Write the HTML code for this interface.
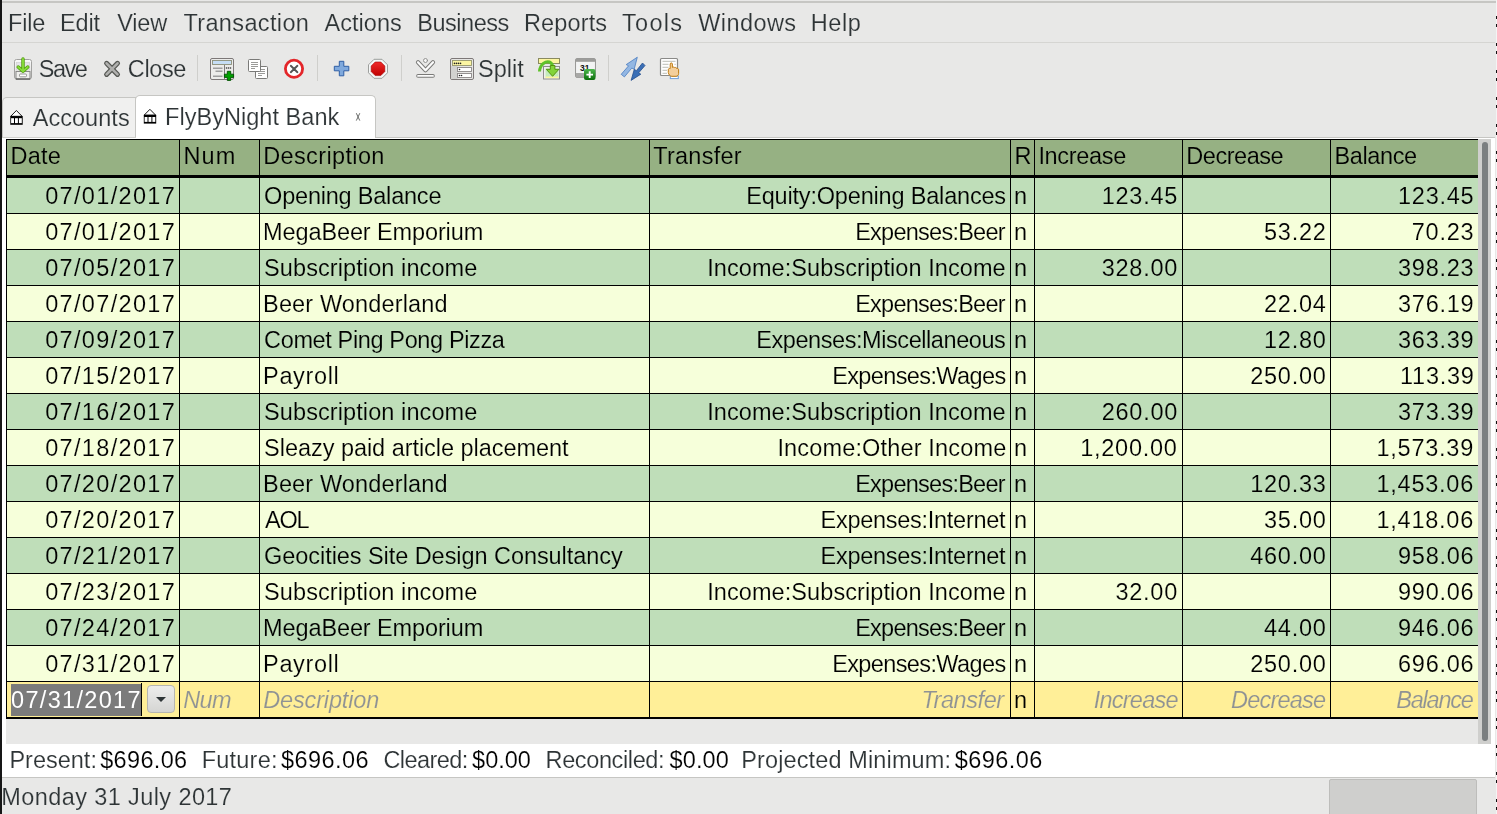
<!DOCTYPE html>
<html><head><meta charset="utf-8">
<style>
*{margin:0;padding:0;box-sizing:border-box}
html,body{width:1497px;height:814px;overflow:hidden;background:#e8e8e7;font-family:"Liberation Sans",sans-serif;position:relative}
.a{position:absolute}
.t{position:absolute;font-size:23.5px;line-height:26px;white-space:pre;color:#000}
</style></head><body>
<div class="a" style="left:0;top:0;width:2px;height:814px;background:#161616"></div>
<div class="a" style="left:1496px;top:0;width:1px;height:814px;background:repeating-linear-gradient(#f4f4f4 0 16px,#111 16px 19px,#f4f4f4 19px 24px,#111 24px 27px)"></div>
<div class="a" style="left:2px;top:1px;width:1494px;height:2px;background:#c6c6c3"></div>
<div class="a" style="left:2px;top:42px;width:1493px;height:1px;background:#d5d5d2"></div>
<div class="a" style="left:197px;top:55px;width:1px;height:26px;background:#cfcfcc"></div>
<div class="a" style="left:317px;top:55px;width:1px;height:26px;background:#cfcfcc"></div>
<div class="a" style="left:401px;top:55px;width:1px;height:26px;background:#cfcfcc"></div>
<div class="a" style="left:608px;top:55px;width:1px;height:26px;background:#cfcfcc"></div>
<div class="a" style="left:2px;top:97px;width:134px;height:41px;background:#f0f0ef;border:1px solid #c6c6c3;border-bottom:none;border-radius:5px 0 0 0"></div>
<div class="a" style="left:135px;top:95px;width:241px;height:43px;background:#fff;border:1px solid #c6c6c3;border-bottom:none;border-radius:5px 5px 0 0"></div>
<div class="a" style="left:376px;top:137px;width:1119px;height:1px;background:#c6c6c3"></div>
<div class="a" style="left:2px;top:137px;width:134px;height:1px;background:#d0d0cd"></div>
<div class="a" style="left:2px;top:138px;width:1493px;height:639px;background:#fff"></div>
<div class="a" style="left:6px;top:139px;width:1472px;height:1px;background:#000"></div>
<div class="a" style="left:6px;top:140px;width:1472px;height:35px;background:#96b183"></div>
<div class="a" style="left:6px;top:175px;width:1472px;height:3px;background:#000"></div>
<div class="a" style="left:6px;width:1472px;top:178px;height:35px;background:#bfdeb9"></div>
<div class="a" style="left:6px;width:1472px;top:213px;height:1px;background:#000"></div>
<div class="a" style="left:6px;width:1472px;top:214px;height:35px;background:#f6ffda"></div>
<div class="a" style="left:6px;width:1472px;top:249px;height:1px;background:#000"></div>
<div class="a" style="left:6px;width:1472px;top:250px;height:35px;background:#bfdeb9"></div>
<div class="a" style="left:6px;width:1472px;top:285px;height:1px;background:#000"></div>
<div class="a" style="left:6px;width:1472px;top:286px;height:35px;background:#f6ffda"></div>
<div class="a" style="left:6px;width:1472px;top:321px;height:1px;background:#000"></div>
<div class="a" style="left:6px;width:1472px;top:322px;height:35px;background:#bfdeb9"></div>
<div class="a" style="left:6px;width:1472px;top:357px;height:1px;background:#000"></div>
<div class="a" style="left:6px;width:1472px;top:358px;height:35px;background:#f6ffda"></div>
<div class="a" style="left:6px;width:1472px;top:393px;height:1px;background:#000"></div>
<div class="a" style="left:6px;width:1472px;top:394px;height:35px;background:#bfdeb9"></div>
<div class="a" style="left:6px;width:1472px;top:429px;height:1px;background:#000"></div>
<div class="a" style="left:6px;width:1472px;top:430px;height:35px;background:#f6ffda"></div>
<div class="a" style="left:6px;width:1472px;top:465px;height:1px;background:#000"></div>
<div class="a" style="left:6px;width:1472px;top:466px;height:35px;background:#bfdeb9"></div>
<div class="a" style="left:6px;width:1472px;top:501px;height:1px;background:#000"></div>
<div class="a" style="left:6px;width:1472px;top:502px;height:35px;background:#f6ffda"></div>
<div class="a" style="left:6px;width:1472px;top:537px;height:1px;background:#000"></div>
<div class="a" style="left:6px;width:1472px;top:538px;height:35px;background:#bfdeb9"></div>
<div class="a" style="left:6px;width:1472px;top:573px;height:1px;background:#000"></div>
<div class="a" style="left:6px;width:1472px;top:574px;height:35px;background:#f6ffda"></div>
<div class="a" style="left:6px;width:1472px;top:609px;height:1px;background:#000"></div>
<div class="a" style="left:6px;width:1472px;top:610px;height:35px;background:#bfdeb9"></div>
<div class="a" style="left:6px;width:1472px;top:645px;height:1px;background:#000"></div>
<div class="a" style="left:6px;width:1472px;top:646px;height:35px;background:#f6ffda"></div>
<div class="a" style="left:6px;width:1472px;top:681px;height:1px;background:#000"></div>
<div class="a" style="left:6px;top:682px;width:1472px;height:35px;background:#ffef98"></div>
<div class="a" style="left:6px;top:717px;width:1472px;height:2px;background:#000"></div>
<div class="a" style="left:11px;top:684px;width:131px;height:32px;background:#7b7b7b"></div>
<div class="a" style="left:147px;top:685px;width:28px;height:28px;border:1px solid #b6b6b3;border-radius:4px;background:linear-gradient(#ededec,#d5d5d3)"></div>
<div class="a" style="left:156px;top:697px;width:0;height:0;border-left:5px solid transparent;border-right:5px solid transparent;border-top:5px solid #2e3436"></div>
<div class="a" style="left:141px;top:683px;width:1px;height:33px;background:#000"></div>
<div class="a" style="left:6px;top:139px;width:1px;height:580px;background:#000"></div><div class="a" style="left:179px;top:139px;width:1px;height:580px;background:#000"></div><div class="a" style="left:259px;top:139px;width:1px;height:580px;background:#000"></div><div class="a" style="left:649px;top:139px;width:1px;height:580px;background:#000"></div><div class="a" style="left:1010px;top:139px;width:1px;height:580px;background:#000"></div><div class="a" style="left:1034px;top:139px;width:1px;height:580px;background:#000"></div><div class="a" style="left:1182px;top:139px;width:1px;height:580px;background:#000"></div><div class="a" style="left:1330px;top:139px;width:1px;height:580px;background:#000"></div>
<div class="a" style="left:6px;top:719px;width:1472px;height:25px;background:#e8e8e7"></div>
<div class="a" style="left:1478px;top:139px;width:13px;height:605px;background:#cfcfcd"></div>
<div class="a" style="left:1482px;top:142px;width:6px;height:599px;background:#7b7f80;border-radius:3px"></div>
<div class="a" style="left:2px;top:777px;width:1493px;height:1px;background:#c6c6c3"></div>
<div class="a" style="left:2px;top:778px;width:1493px;height:36px;background:#e8e8e7"></div>
<div class="a" style="left:1329px;top:779px;width:148px;height:40px;background:#cfcfcd;border:1px solid #bdbdbb;border-radius:2px"></div>
<svg class="a" style="left:0;top:0" width="1497" height="814" viewBox="0 0 1497 814">
<defs>
<linearGradient id="gGreen" x1="0" y1="0" x2="0" y2="1"><stop offset="0" stop-color="#9be35a"/><stop offset="1" stop-color="#4eb31a"/></linearGradient>
<linearGradient id="gCab" x1="0" y1="0" x2="0" y2="1"><stop offset="0" stop-color="#fafafa"/><stop offset="1" stop-color="#d9d9d7"/></linearGradient>
<linearGradient id="gBadge" x1="0" y1="0" x2="0" y2="1"><stop offset="0" stop-color="#4cb84c"/><stop offset="1" stop-color="#0b6e0b"/></linearGradient>
<linearGradient id="gRed" x1="0" y1="0" x2="0" y2="1"><stop offset="0" stop-color="#ef2929"/><stop offset="1" stop-color="#c00000"/></linearGradient>
</defs>
<!-- Save icon -->
<g>
 <rect x="14.5" y="59.5" width="17" height="19.5" rx="2" fill="url(#gCab)" stroke="#a2a2a0" stroke-width="1"/>
 <rect x="16.5" y="62.5" width="13" height="7.5" fill="#e4e4e8" stroke="#cfcfcf" stroke-width="0.6"/>
 <rect x="16" y="71.5" width="14" height="7.5" fill="#efefed" stroke="#8a8a88" stroke-width="1"/>
 <path d="M16 79 H30" stroke="#5c5c5a" stroke-width="1.2"/>
 <rect x="19.5" y="74" width="7" height="2.8" rx="1" fill="#fff" stroke="#8a8a88" stroke-width="0.9"/>
 <g fill="none" stroke-linecap="round" stroke-linejoin="round">
  <path d="M23 59 V70.5 M18.2 67 L23 71.2 L27.8 67" stroke="#4e9a06" stroke-width="3.4"/>
  <path d="M23 59 V70.5 M18.2 67 L23 71.2 L27.8 67" stroke="#86dc3a" stroke-width="1.9"/>
 </g>
</g>
<!-- Close X -->
<g stroke-linecap="round">
 <path d="M106.6 63.3 L117.5 74.4 M117.5 63.3 L106.6 74.4" stroke="#555753" stroke-width="5"/>
 <path d="M106.6 63.3 L117.5 74.4 M117.5 63.3 L106.6 74.4" stroke="#b0b0ae" stroke-width="2.6"/>
</g>
<!-- New transaction -->
<g>
 <rect x="210.5" y="58.5" width="23" height="21" rx="1.5" fill="#ececea" stroke="#7d7878" stroke-width="1"/>
 <rect x="212.5" y="60.5" width="19" height="4" fill="#c6def5" stroke="#8c8f78" stroke-width="0.9"/>
 <path d="M224.5 65 V79" stroke="#7d7d7d" stroke-width="1"/>
 <path d="M213 68.2 h9.5 M215.5 71.2 h7 M213 76.2 h9.5" stroke="#9e9e9e" stroke-width="1.5"/>
 <circle cx="226.5" cy="68" r="0.8" fill="#333"/><circle cx="228.5" cy="68" r="0.8" fill="#333"/><circle cx="230.5" cy="68" r="0.8" fill="#333"/>
 <path d="M227.3 71.3 h3.4 v2.9 h2.9 v3.2 h-2.9 v3 h-3.4 v-3 h-2.9 v-3.2 h2.9 z" fill="#00a000" stroke="#004d00" stroke-width="0.9"/>
</g>
<!-- Duplicate -->
<g>
 <rect x="255.5" y="66.5" width="12" height="12" rx="1" fill="#fff" stroke="#7a7a78" stroke-width="1"/>
 <path d="M258 69.5 h7 M258 71.5 h7 M258 73.5 h7 M258 75.5 h4" stroke="#9a9a98" stroke-width="1"/>
 <rect x="248.5" y="59.5" width="12" height="12" rx="1" fill="#fff" stroke="#7a7a78" stroke-width="1"/>
 <path d="M251 62.5 h7 M251 64.5 h7 M251 66.5 h7 M251 68.5 h4" stroke="#9a9a98" stroke-width="1"/>
</g>
<!-- Delete -->
<g>
 <circle cx="294" cy="68.8" r="8.6" fill="#fff" stroke="#e3262a" stroke-width="2.8"/>
 <path d="M290.8 65.8 L297.4 72.2 M297.4 65.8 L290.8 72.2" stroke="#555" stroke-width="1.9" stroke-linecap="round"/>
</g>
<!-- Blue plus -->
<path d="M339.3 61.3 h4.5 v5 h5 v4.5 h-5 v5 h-4.5 v-5 h-5 v-4.5 h5 z" fill="#7fa9dd" stroke="#2f5fa5" stroke-width="1" stroke-linejoin="round"/>
<!-- Stop octagon -->
<g>
 <path d="M374 59.3 h8 l5.5 5.5 v8 l-5.5 5.5 h-8 l-5.5 -5.5 v-8 z" fill="#f4f6f6" stroke="#9d9f9d" stroke-width="1"/>
 <path d="M375.2 62 h5.6 l4 4 v5.6 l-4 4 h-5.6 l-4 -4 v-5.6 z" fill="url(#gRed)" stroke="#a40000" stroke-width="0.6"/>
</g>
<!-- Chevron down -->
<g stroke-linecap="round" stroke-linejoin="round" fill="none">
 <path d="M418 62.3 L425.5 70.2 L433 62.3" stroke="#7a7a78" stroke-width="4.2"/>
 <path d="M418 62.3 L425.5 70.2 L433 62.3" stroke="#fbfbfb" stroke-width="2.3"/>
 <path d="M418 75.9 H433" stroke="#7a7a78" stroke-width="3.6"/>
 <path d="M418 75.9 H433" stroke="#fbfbfb" stroke-width="1.8"/>
 <circle cx="425.5" cy="60.5" r="2" fill="#f7f7f7" stroke="#8a8a88" stroke-width="0.9"/>
</g>
<!-- Split -->
<g>
 <rect x="450.5" y="58.5" width="23" height="21" rx="1.5" fill="#e6e6e4" stroke="#7d7878" stroke-width="1"/>
 <rect x="452.5" y="60.5" width="19" height="5" fill="#fcf6a2" stroke="#96966c" stroke-width="0.9"/>
 <circle cx="454.5" cy="63.4" r="0.8" fill="#222"/><circle cx="456.5" cy="63.4" r="0.8" fill="#222"/><circle cx="458.5" cy="63.4" r="0.8" fill="#222"/><circle cx="460.5" cy="63.4" r="0.8" fill="#222"/>
 <rect x="451" y="66" width="6.5" height="13" fill="#d2d2d0"/>
 <rect x="457.5" y="67.5" width="14" height="4" fill="#fff" stroke="#8a8686" stroke-width="0.9"/>
 <rect x="457.5" y="73.5" width="14" height="4" fill="#fff" stroke="#8a8686" stroke-width="0.9"/>
 <circle cx="459.5" cy="69.5" r="0.8" fill="#222"/>
 <circle cx="459.5" cy="75.5" r="0.8" fill="#222"/><circle cx="461.5" cy="75.5" r="0.8" fill="#222"/>
</g>
<!-- Jump -->
<g>
 <rect x="543.5" y="66.5" width="16" height="12.5" fill="#f0f0ee" stroke="#8e8e8c" stroke-width="1"/>
 <rect x="545.5" y="68.5" width="13" height="9" fill="#c5ebbd"/>
 <rect x="545.5" y="76.5" width="13" height="1.6" fill="#fdf6a0"/>
 <rect x="538.5" y="58.5" width="21" height="5" fill="#fdf6a0" stroke="#8a8a60" stroke-width="1"/>
 <path d="M539.5 71.5 C540 64 546 60.8 549.5 62 C552 63 552.8 65 552.8 68.5" fill="none" stroke="#5fc22a" stroke-width="3"/>
 <path d="M550.3 65.5 h4.6 v3.8 h4 l-6.3 7 l-6.3 -7 h4 z" fill="#83d43a" stroke="#4e8a06" stroke-width="0.9" stroke-linejoin="round"/>
</g>
<!-- Calendar -->
<g>
 <rect x="575.5" y="58.5" width="20" height="19" rx="1.5" fill="#ededec" stroke="#9a9a98" stroke-width="1"/>
 <rect x="576" y="59" width="19" height="2.8" fill="#9c9c9a"/>
 <rect x="576.5" y="62" width="18" height="11" fill="#f3f4f4"/>
 <rect x="576" y="73" width="19" height="4.5" fill="#a8a8a6"/>
 <text x="580" y="71" font-family="Liberation Sans" font-weight="bold" font-size="8.5" fill="#111">31</text>
 <rect x="584" y="69" width="11.5" height="11" rx="2" fill="url(#gBadge)"/>
 <path d="M589.7 71.3 V78 M586.4 74.6 H593" stroke="#fff" stroke-width="1.9"/>
</g>
<!-- Blue arrows -->
<g stroke-linejoin="round">
 <path d="M637.3 57.2 L634.2 69.2 L631.8 68.1 L624.4 76.9 L621.2 74.3 L628.6 65.8 L626.2 64.6 Z" fill="#93b7e3" stroke="#4a7cc0" stroke-width="0.8"/>
 <path d="M631.1 80.4 L634.3 69.3 L636.4 70.7 L642.5 63 L645 65.5 L638.7 72.8 L640.8 74.2 Z" fill="#3b6fb6" stroke="#234e8e" stroke-width="0.8"/>
</g>
<!-- Doc with hand -->
<g>
 <rect x="660.5" y="58.5" width="17" height="17" rx="1" fill="#fff" stroke="#8a8a88" stroke-width="1.2"/>
 <path d="M662.5 61.3 h13 M662.5 64.3 h6 M662.5 67.3 h6 M662.5 70.3 h4.5 M662.5 73.3 h4.5 M674.5 64.3 h1.2" stroke="#c8cac4" stroke-width="1.3"/>
 <rect x="670.3" y="76" width="8" height="2.6" fill="#fff" stroke="#6f9fd8" stroke-width="1"/>
 <path d="M670.2 64 C670.2 62.6 672.4 62.6 672.4 64 V67.4 C673.4 66.8 674.4 67 674.6 67.6 C675.6 67.2 676.6 67.6 676.6 68.4 C677.6 68.2 678.6 68.6 678.6 69.8 V73.5 C678.6 75.3 677.3 76.3 676 76.3 H671.8 C670.2 76.3 668.5 74.5 668.3 72.5 V69.5 C668.3 68.6 669.3 68.3 670.2 68.6 Z" fill="#f3cf9c" stroke="#c17d11" stroke-width="1"/>
</g>
<!-- Bank icons -->
<g id="bank1">
 <path d="M16.4 110.5 L22.1 116.3 H10.7 Z" fill="#fff" stroke="#000" stroke-width="0.9" stroke-linejoin="round"/>
 <rect x="10.3" y="116.1" width="12.4" height="8.7" fill="#000"/>
 <rect x="11.1" y="118.2" width="2.9" height="4.9" fill="#fff"/>
 <rect x="15.0" y="118.2" width="2.9" height="4.9" fill="#fff"/>
 <rect x="18.9" y="118.2" width="2.9" height="4.9" fill="#fff"/>
</g>
<use href="#bank1" x="133.5" y="-1.2"/>
<!-- tab close -->
<path d="M356.3 113.2 L359.8 120.6 M359.8 113.2 L356.3 120.6" stroke="#6b6d6b" stroke-width="1" fill="none"/>
</svg>

<div class="a" style="left:0;top:0;width:1497px;height:814px;will-change:transform">
<div class="t" style="left:8.0px;top:10px;letter-spacing:-0.17px;color:#2e3436;-webkit-text-stroke:0.15px #e8e8e7;">File</div>
<div class="t" style="left:60.1px;top:10px;letter-spacing:-0.17px;color:#2e3436;-webkit-text-stroke:0.15px #e8e8e7;">Edit</div>
<div class="t" style="left:117.2px;top:10px;letter-spacing:-0.17px;color:#2e3436;-webkit-text-stroke:0.15px #e8e8e7;">View</div>
<div class="t" style="left:183.4px;top:10px;letter-spacing:0.36px;color:#2e3436;-webkit-text-stroke:0.15px #e8e8e7;">Transaction</div>
<div class="t" style="left:324.4px;top:10px;letter-spacing:0.07px;color:#2e3436;-webkit-text-stroke:0.15px #e8e8e7;">Actions</div>
<div class="t" style="left:417.2px;top:10px;letter-spacing:-0.46px;color:#2e3436;-webkit-text-stroke:0.15px #e8e8e7;">Business</div>
<div class="t" style="left:524.0px;top:10px;letter-spacing:0.13px;color:#2e3436;-webkit-text-stroke:0.15px #e8e8e7;">Reports</div>
<div class="t" style="left:622.0px;top:10px;letter-spacing:1.30px;color:#2e3436;-webkit-text-stroke:0.15px #e8e8e7;">Tools</div>
<div class="t" style="left:698.2px;top:10px;letter-spacing:0.43px;color:#2e3436;-webkit-text-stroke:0.15px #e8e8e7;">Windows</div>
<div class="t" style="left:810.8px;top:10px;letter-spacing:0.57px;color:#2e3436;-webkit-text-stroke:0.15px #e8e8e7;">Help</div>
<div class="t" style="left:38.8px;top:56px;letter-spacing:-1.50px;color:#2e3436;-webkit-text-stroke:0.15px #e8e8e7;">Save</div>
<div class="t" style="left:127.8px;top:56px;letter-spacing:-0.38px;color:#2e3436;-webkit-text-stroke:0.15px #e8e8e7;">Close</div>
<div class="t" style="left:478.0px;top:56px;letter-spacing:0.00px;color:#2e3436;-webkit-text-stroke:0.15px #e8e8e7;">Split</div>
<div class="t" style="left:32.7px;top:105px;letter-spacing:0.04px;color:#2e3436;-webkit-text-stroke:0.15px #f0f0ef;">Accounts</div>
<div class="t" style="left:165.0px;top:104px;letter-spacing:0.04px;color:#2e3436;-webkit-text-stroke:0.15px #ffffff;">FlyByNight Bank</div>
<div class="t" style="left:10.5px;top:143px;letter-spacing:0.20px;color:#000;-webkit-text-stroke:0.15px #96b183;">Date</div>
<div class="t" style="left:183.4px;top:143px;letter-spacing:1.20px;color:#000;-webkit-text-stroke:0.15px #96b183;">Num</div>
<div class="t" style="left:263.2px;top:143px;letter-spacing:0.37px;color:#000;-webkit-text-stroke:0.15px #96b183;">Description</div>
<div class="t" style="left:653.2px;top:143px;letter-spacing:0.26px;color:#000;-webkit-text-stroke:0.15px #96b183;">Transfer</div>
<div class="t" style="left:1014.5px;top:143px;letter-spacing:0.00px;color:#000;-webkit-text-stroke:0.15px #96b183;">R</div>
<div class="t" style="left:1038.4px;top:143px;letter-spacing:-0.31px;color:#000;-webkit-text-stroke:0.15px #96b183;">Increase</div>
<div class="t" style="left:1186.3px;top:143px;letter-spacing:-0.47px;color:#000;-webkit-text-stroke:0.15px #96b183;">Decrease</div>
<div class="t" style="left:1334.5px;top:143px;letter-spacing:-0.38px;color:#000;-webkit-text-stroke:0.15px #96b183;">Balance</div>
<div class="t" style="left:45.2px;top:183px;letter-spacing:1.33px;color:#000;-webkit-text-stroke:0.15px #bfdeb9;">07/01/2017</div>
<div class="t" style="left:264.1px;top:183px;letter-spacing:-0.21px;color:#000;-webkit-text-stroke:0.15px #bfdeb9;">Opening Balance</div>
<div class="t" style="left:746.2px;top:183px;letter-spacing:-0.18px;color:#000;-webkit-text-stroke:0.15px #bfdeb9;">Equity:Opening Balances</div>
<div class="t" style="left:1014.0px;top:183px;letter-spacing:0.00px;color:#000;-webkit-text-stroke:0.15px #bfdeb9;">n</div>
<div class="t" style="left:1101.7px;top:183px;letter-spacing:0.75px;color:#000;-webkit-text-stroke:0.15px #bfdeb9;">123.45</div>
<div class="t" style="left:1398.0px;top:183px;letter-spacing:0.75px;color:#000;-webkit-text-stroke:0.15px #bfdeb9;">123.45</div>
<div class="t" style="left:45.2px;top:219px;letter-spacing:1.33px;color:#000;-webkit-text-stroke:0.15px #f6ffda;">07/01/2017</div>
<div class="t" style="left:263.1px;top:219px;letter-spacing:-0.12px;color:#000;-webkit-text-stroke:0.15px #f6ffda;">MegaBeer Emporium</div>
<div class="t" style="left:855.2px;top:219px;letter-spacing:-0.75px;color:#000;-webkit-text-stroke:0.15px #f6ffda;">Expenses:Beer</div>
<div class="t" style="left:1014.0px;top:219px;letter-spacing:0.00px;color:#000;-webkit-text-stroke:0.15px #f6ffda;">n</div>
<div class="t" style="left:1264.0px;top:219px;letter-spacing:0.75px;color:#000;-webkit-text-stroke:0.15px #f6ffda;">53.22</div>
<div class="t" style="left:1411.8px;top:219px;letter-spacing:0.75px;color:#000;-webkit-text-stroke:0.15px #f6ffda;">70.23</div>
<div class="t" style="left:45.2px;top:255px;letter-spacing:1.33px;color:#000;-webkit-text-stroke:0.15px #bfdeb9;">07/05/2017</div>
<div class="t" style="left:264.1px;top:255px;letter-spacing:0.09px;color:#000;-webkit-text-stroke:0.15px #bfdeb9;">Subscription income</div>
<div class="t" style="left:707.2px;top:255px;letter-spacing:0.08px;color:#000;-webkit-text-stroke:0.15px #bfdeb9;">Income:Subscription Income</div>
<div class="t" style="left:1014.0px;top:255px;letter-spacing:0.00px;color:#000;-webkit-text-stroke:0.15px #bfdeb9;">n</div>
<div class="t" style="left:1101.7px;top:255px;letter-spacing:0.75px;color:#000;-webkit-text-stroke:0.15px #bfdeb9;">328.00</div>
<div class="t" style="left:1398.0px;top:255px;letter-spacing:0.75px;color:#000;-webkit-text-stroke:0.15px #bfdeb9;">398.23</div>
<div class="t" style="left:45.2px;top:291px;letter-spacing:1.33px;color:#000;-webkit-text-stroke:0.15px #f6ffda;">07/07/2017</div>
<div class="t" style="left:263.1px;top:291px;letter-spacing:0.14px;color:#000;-webkit-text-stroke:0.15px #f6ffda;">Beer Wonderland</div>
<div class="t" style="left:855.2px;top:291px;letter-spacing:-0.75px;color:#000;-webkit-text-stroke:0.15px #f6ffda;">Expenses:Beer</div>
<div class="t" style="left:1014.0px;top:291px;letter-spacing:0.00px;color:#000;-webkit-text-stroke:0.15px #f6ffda;">n</div>
<div class="t" style="left:1264.0px;top:291px;letter-spacing:0.75px;color:#000;-webkit-text-stroke:0.15px #f6ffda;">22.04</div>
<div class="t" style="left:1398.0px;top:291px;letter-spacing:0.75px;color:#000;-webkit-text-stroke:0.15px #f6ffda;">376.19</div>
<div class="t" style="left:45.2px;top:327px;letter-spacing:1.33px;color:#000;-webkit-text-stroke:0.15px #bfdeb9;">07/09/2017</div>
<div class="t" style="left:264.1px;top:327px;letter-spacing:-0.37px;color:#000;-webkit-text-stroke:0.15px #bfdeb9;">Comet Ping Pong Pizza</div>
<div class="t" style="left:756.2px;top:327px;letter-spacing:-0.43px;color:#000;-webkit-text-stroke:0.15px #bfdeb9;">Expenses:Miscellaneous</div>
<div class="t" style="left:1014.0px;top:327px;letter-spacing:0.00px;color:#000;-webkit-text-stroke:0.15px #bfdeb9;">n</div>
<div class="t" style="left:1264.0px;top:327px;letter-spacing:0.75px;color:#000;-webkit-text-stroke:0.15px #bfdeb9;">12.80</div>
<div class="t" style="left:1398.0px;top:327px;letter-spacing:0.75px;color:#000;-webkit-text-stroke:0.15px #bfdeb9;">363.39</div>
<div class="t" style="left:45.2px;top:363px;letter-spacing:1.33px;color:#000;-webkit-text-stroke:0.15px #f6ffda;">07/15/2017</div>
<div class="t" style="left:263.1px;top:363px;letter-spacing:0.63px;color:#000;-webkit-text-stroke:0.15px #f6ffda;">Payroll</div>
<div class="t" style="left:832.2px;top:363px;letter-spacing:-0.62px;color:#000;-webkit-text-stroke:0.15px #f6ffda;">Expenses:Wages</div>
<div class="t" style="left:1014.0px;top:363px;letter-spacing:0.00px;color:#000;-webkit-text-stroke:0.15px #f6ffda;">n</div>
<div class="t" style="left:1250.2px;top:363px;letter-spacing:0.75px;color:#000;-webkit-text-stroke:0.15px #f6ffda;">250.00</div>
<div class="t" style="left:1400.0px;top:363px;letter-spacing:0.75px;color:#000;-webkit-text-stroke:0.15px #f6ffda;">113.39</div>
<div class="t" style="left:45.2px;top:399px;letter-spacing:1.33px;color:#000;-webkit-text-stroke:0.15px #bfdeb9;">07/16/2017</div>
<div class="t" style="left:264.1px;top:399px;letter-spacing:0.09px;color:#000;-webkit-text-stroke:0.15px #bfdeb9;">Subscription income</div>
<div class="t" style="left:707.2px;top:399px;letter-spacing:0.08px;color:#000;-webkit-text-stroke:0.15px #bfdeb9;">Income:Subscription Income</div>
<div class="t" style="left:1014.0px;top:399px;letter-spacing:0.00px;color:#000;-webkit-text-stroke:0.15px #bfdeb9;">n</div>
<div class="t" style="left:1101.7px;top:399px;letter-spacing:0.75px;color:#000;-webkit-text-stroke:0.15px #bfdeb9;">260.00</div>
<div class="t" style="left:1398.0px;top:399px;letter-spacing:0.75px;color:#000;-webkit-text-stroke:0.15px #bfdeb9;">373.39</div>
<div class="t" style="left:45.2px;top:435px;letter-spacing:1.33px;color:#000;-webkit-text-stroke:0.15px #f6ffda;">07/18/2017</div>
<div class="t" style="left:264.1px;top:435px;letter-spacing:-0.04px;color:#000;-webkit-text-stroke:0.15px #f6ffda;">Sleazy paid article placement</div>
<div class="t" style="left:777.4px;top:435px;letter-spacing:0.16px;color:#000;-webkit-text-stroke:0.15px #f6ffda;">Income:Other Income</div>
<div class="t" style="left:1014.0px;top:435px;letter-spacing:0.00px;color:#000;-webkit-text-stroke:0.15px #f6ffda;">n</div>
<div class="t" style="left:1080.2px;top:435px;letter-spacing:0.75px;color:#000;-webkit-text-stroke:0.15px #f6ffda;">1,200.00</div>
<div class="t" style="left:1376.5px;top:435px;letter-spacing:0.75px;color:#000;-webkit-text-stroke:0.15px #f6ffda;">1,573.39</div>
<div class="t" style="left:45.2px;top:471px;letter-spacing:1.33px;color:#000;-webkit-text-stroke:0.15px #bfdeb9;">07/20/2017</div>
<div class="t" style="left:263.1px;top:471px;letter-spacing:0.14px;color:#000;-webkit-text-stroke:0.15px #bfdeb9;">Beer Wonderland</div>
<div class="t" style="left:855.2px;top:471px;letter-spacing:-0.75px;color:#000;-webkit-text-stroke:0.15px #bfdeb9;">Expenses:Beer</div>
<div class="t" style="left:1014.0px;top:471px;letter-spacing:0.00px;color:#000;-webkit-text-stroke:0.15px #bfdeb9;">n</div>
<div class="t" style="left:1250.2px;top:471px;letter-spacing:0.75px;color:#000;-webkit-text-stroke:0.15px #bfdeb9;">120.33</div>
<div class="t" style="left:1376.5px;top:471px;letter-spacing:0.75px;color:#000;-webkit-text-stroke:0.15px #bfdeb9;">1,453.06</div>
<div class="t" style="left:45.2px;top:507px;letter-spacing:1.33px;color:#000;-webkit-text-stroke:0.15px #f6ffda;">07/20/2017</div>
<div class="t" style="left:265.1px;top:507px;letter-spacing:-1.30px;color:#000;-webkit-text-stroke:0.15px #f6ffda;">AOL</div>
<div class="t" style="left:820.5px;top:507px;letter-spacing:-0.27px;color:#000;-webkit-text-stroke:0.15px #f6ffda;">Expenses:Internet</div>
<div class="t" style="left:1014.0px;top:507px;letter-spacing:0.00px;color:#000;-webkit-text-stroke:0.15px #f6ffda;">n</div>
<div class="t" style="left:1264.0px;top:507px;letter-spacing:0.75px;color:#000;-webkit-text-stroke:0.15px #f6ffda;">35.00</div>
<div class="t" style="left:1376.5px;top:507px;letter-spacing:0.75px;color:#000;-webkit-text-stroke:0.15px #f6ffda;">1,418.06</div>
<div class="t" style="left:45.2px;top:543px;letter-spacing:1.33px;color:#000;-webkit-text-stroke:0.15px #bfdeb9;">07/21/2017</div>
<div class="t" style="left:264.1px;top:543px;letter-spacing:-0.06px;color:#000;-webkit-text-stroke:0.15px #bfdeb9;">Geocities Site Design Consultancy</div>
<div class="t" style="left:820.5px;top:543px;letter-spacing:-0.27px;color:#000;-webkit-text-stroke:0.15px #bfdeb9;">Expenses:Internet</div>
<div class="t" style="left:1014.0px;top:543px;letter-spacing:0.00px;color:#000;-webkit-text-stroke:0.15px #bfdeb9;">n</div>
<div class="t" style="left:1250.2px;top:543px;letter-spacing:0.75px;color:#000;-webkit-text-stroke:0.15px #bfdeb9;">460.00</div>
<div class="t" style="left:1398.0px;top:543px;letter-spacing:0.75px;color:#000;-webkit-text-stroke:0.15px #bfdeb9;">958.06</div>
<div class="t" style="left:45.2px;top:579px;letter-spacing:1.33px;color:#000;-webkit-text-stroke:0.15px #f6ffda;">07/23/2017</div>
<div class="t" style="left:264.1px;top:579px;letter-spacing:0.09px;color:#000;-webkit-text-stroke:0.15px #f6ffda;">Subscription income</div>
<div class="t" style="left:707.2px;top:579px;letter-spacing:0.08px;color:#000;-webkit-text-stroke:0.15px #f6ffda;">Income:Subscription Income</div>
<div class="t" style="left:1014.0px;top:579px;letter-spacing:0.00px;color:#000;-webkit-text-stroke:0.15px #f6ffda;">n</div>
<div class="t" style="left:1115.4px;top:579px;letter-spacing:0.75px;color:#000;-webkit-text-stroke:0.15px #f6ffda;">32.00</div>
<div class="t" style="left:1398.0px;top:579px;letter-spacing:0.75px;color:#000;-webkit-text-stroke:0.15px #f6ffda;">990.06</div>
<div class="t" style="left:45.2px;top:615px;letter-spacing:1.33px;color:#000;-webkit-text-stroke:0.15px #bfdeb9;">07/24/2017</div>
<div class="t" style="left:263.1px;top:615px;letter-spacing:-0.12px;color:#000;-webkit-text-stroke:0.15px #bfdeb9;">MegaBeer Emporium</div>
<div class="t" style="left:855.2px;top:615px;letter-spacing:-0.75px;color:#000;-webkit-text-stroke:0.15px #bfdeb9;">Expenses:Beer</div>
<div class="t" style="left:1014.0px;top:615px;letter-spacing:0.00px;color:#000;-webkit-text-stroke:0.15px #bfdeb9;">n</div>
<div class="t" style="left:1264.0px;top:615px;letter-spacing:0.75px;color:#000;-webkit-text-stroke:0.15px #bfdeb9;">44.00</div>
<div class="t" style="left:1398.0px;top:615px;letter-spacing:0.75px;color:#000;-webkit-text-stroke:0.15px #bfdeb9;">946.06</div>
<div class="t" style="left:45.2px;top:651px;letter-spacing:1.33px;color:#000;-webkit-text-stroke:0.15px #f6ffda;">07/31/2017</div>
<div class="t" style="left:263.1px;top:651px;letter-spacing:0.63px;color:#000;-webkit-text-stroke:0.15px #f6ffda;">Payroll</div>
<div class="t" style="left:832.2px;top:651px;letter-spacing:-0.62px;color:#000;-webkit-text-stroke:0.15px #f6ffda;">Expenses:Wages</div>
<div class="t" style="left:1014.0px;top:651px;letter-spacing:0.00px;color:#000;-webkit-text-stroke:0.15px #f6ffda;">n</div>
<div class="t" style="left:1250.2px;top:651px;letter-spacing:0.75px;color:#000;-webkit-text-stroke:0.15px #f6ffda;">250.00</div>
<div class="t" style="left:1398.0px;top:651px;letter-spacing:0.75px;color:#000;-webkit-text-stroke:0.15px #f6ffda;">696.06</div>
<div class="t" style="left:11.0px;top:687px;letter-spacing:1.33px;color:#fff;">07/31/2017</div>
<div class="t" style="left:183.2px;top:687px;letter-spacing:-0.60px;color:#8f9294;font-style:italic;-webkit-text-stroke:0.15px #ffef98;">Num</div>
<div class="t" style="left:263.3px;top:687px;letter-spacing:-0.16px;color:#8f9294;font-style:italic;-webkit-text-stroke:0.15px #ffef98;">Description</div>
<div class="t" style="left:921.4px;top:687px;letter-spacing:-0.43px;color:#8f9294;font-style:italic;-webkit-text-stroke:0.15px #ffef98;">Transfer</div>
<div class="t" style="left:1014.0px;top:687px;letter-spacing:0.00px;color:#000;-webkit-text-stroke:0.15px #ffef98;">n</div>
<div class="t" style="left:1093.7px;top:687px;letter-spacing:-0.76px;color:#8f9294;font-style:italic;-webkit-text-stroke:0.15px #ffef98;">Increase</div>
<div class="t" style="left:1231.0px;top:687px;letter-spacing:-0.79px;color:#8f9294;font-style:italic;-webkit-text-stroke:0.15px #ffef98;">Decrease</div>
<div class="t" style="left:1396.3px;top:687px;letter-spacing:-1.22px;color:#8f9294;font-style:italic;-webkit-text-stroke:0.15px #ffef98;">Balance</div>
<div class="t" style="left:9.4px;top:747px;letter-spacing:0.00px;color:#2e3436;-webkit-text-stroke:0.15px #ffffff;">Present:</div>
<div class="t" style="left:100.2px;top:747px;letter-spacing:0.33px;color:#000;-webkit-text-stroke:0.15px #ffffff;">$696.06</div>
<div class="t" style="left:201.7px;top:747px;letter-spacing:0.22px;color:#2e3436;-webkit-text-stroke:0.15px #ffffff;">Future:</div>
<div class="t" style="left:280.9px;top:747px;letter-spacing:0.47px;color:#000;-webkit-text-stroke:0.15px #ffffff;">$696.06</div>
<div class="t" style="left:383.4px;top:747px;letter-spacing:-0.57px;color:#2e3436;-webkit-text-stroke:0.15px #ffffff;">Cleared:</div>
<div class="t" style="left:472.1px;top:747px;letter-spacing:0.00px;color:#000;-webkit-text-stroke:0.15px #ffffff;">$0.00</div>
<div class="t" style="left:545.6px;top:747px;letter-spacing:-0.38px;color:#2e3436;-webkit-text-stroke:0.15px #ffffff;">Reconciled:</div>
<div class="t" style="left:669.5px;top:747px;letter-spacing:0.12px;color:#000;-webkit-text-stroke:0.15px #ffffff;">$0.00</div>
<div class="t" style="left:741.2px;top:747px;letter-spacing:0.13px;color:#2e3436;-webkit-text-stroke:0.15px #ffffff;">Projected Minimum:</div>
<div class="t" style="left:954.8px;top:747px;letter-spacing:0.43px;color:#000;-webkit-text-stroke:0.15px #ffffff;">$696.06</div>
<div class="t" style="left:1.3px;top:784px;letter-spacing:0.40px;color:#2e3436;-webkit-text-stroke:0.15px #e8e8e7;">Monday 31 July 2017</div>
</div>
</body></html>
